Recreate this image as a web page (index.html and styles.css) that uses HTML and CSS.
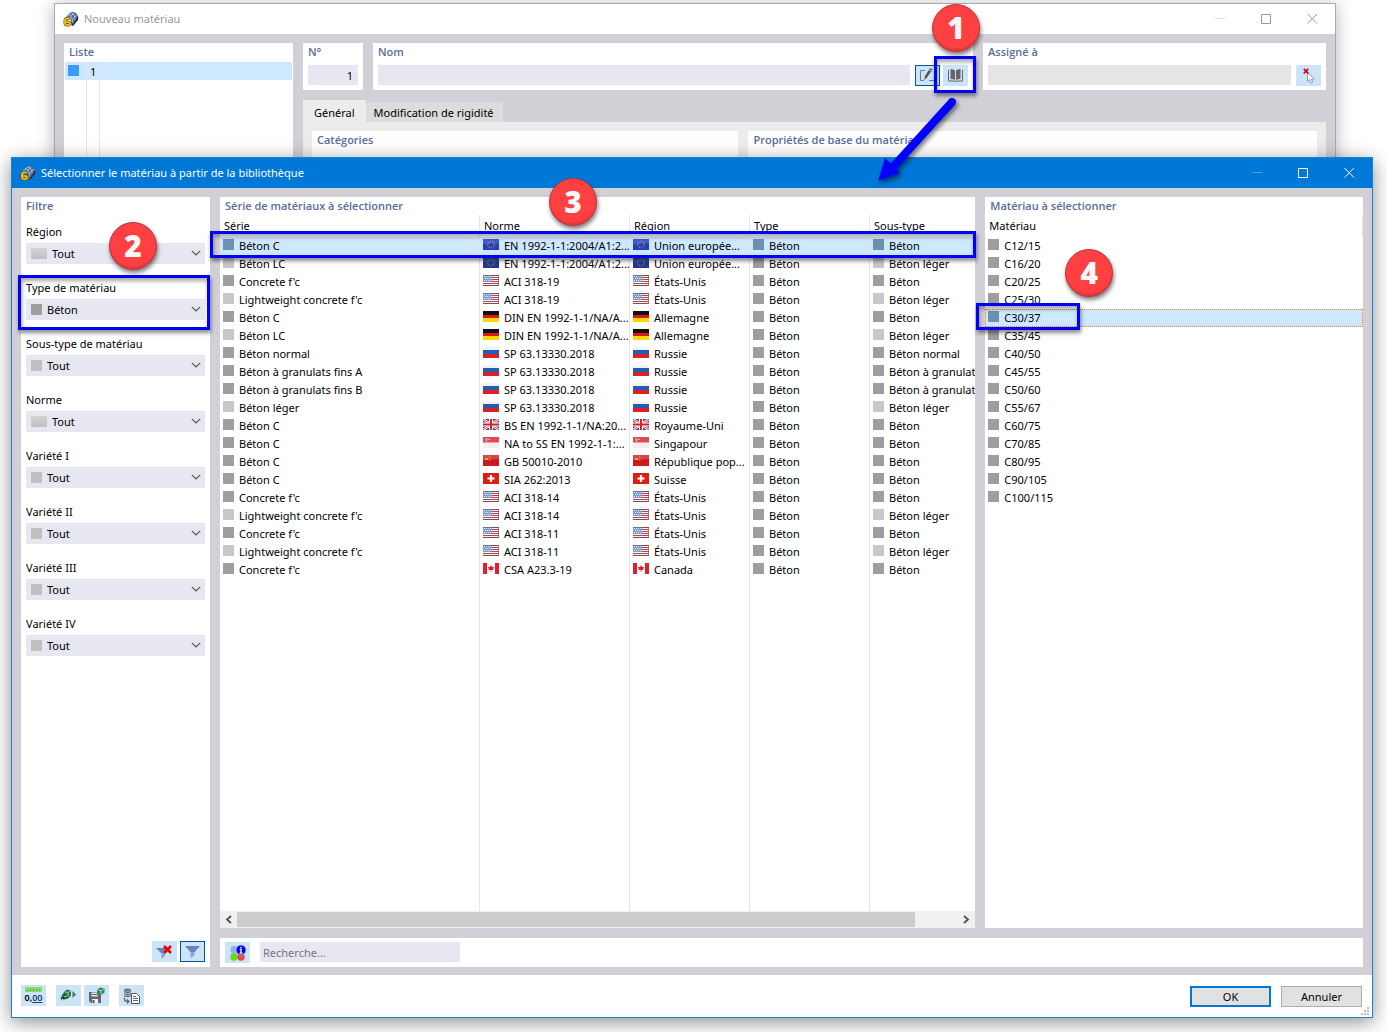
FILE: index.html
```html
<!DOCTYPE html>
<html lang="fr">
<head>
    <meta charset="UTF-8">
    <meta name="viewport" content="width=device-width, initial-scale=1.0">
    <title>Nouveau matériau</title>
    <link rel="stylesheet" href="styles.css">
</head>
<body>
    <!-- icons -->
    <svg class="hidden" aria-hidden="true">
        <symbol id="app" viewBox="0 0 16 16">
            <path d="M2 7 7 1.5Q9 0 12 1.5 15 3 15.5 7L10 15 8 14 8 9Q6 6 2 8z" fill="#56698a"/>
            <path d="M3 6 8 2M6 7l5-5M9 9l5-5M5 3.500Q9 4 10 12M8 1.500Q12 3 12.500 11" stroke="#a9bbd8" fill="none"/>
            <path d="M15 5v4l-5 6-1-1z" fill="#242c44"/>
            <path d="M6.500 7.500H4Q2 7.500 2 10v2q0 2 2 2h1q2 0 2-1.500T5 11H2.500" fill="none" stroke="#7c5a08" stroke-width="3"/>
            <path d="M6.500 7.500H4Q2 7.500 2 10v2q0 2 2 2h1q2 0 2-1.500T5 11H2.500" fill="none" stroke="#f5c926" stroke-width="1.600"/>
        </symbol>
        <symbol id="chevron" viewBox="0 0 10 6"><path d="M.8.8 5 5 9.200.8" fill="none" stroke="#555" stroke-width="1.100"/></symbol>
        <symbol id="minimize" viewBox="0 0 11 11"><path d="M0 4.500h10" stroke="currentColor" opacity=".3"/></symbol>
        <symbol id="maximize" viewBox="0 0 11 11"><path d="M.5.5h9v9h-9z" fill="none" stroke="currentColor"/></symbol>
        <symbol id="close" viewBox="0 0 11 11"><path d="M.5 0l9.500 9.500m0-9.500-9.500 9.500" fill="none" stroke="currentColor"/></symbol>
        <symbol id="edit" viewBox="0 0 17 15">
            <path d="M6 2.500H1.500v10h3M10 12.500h5.500V8" fill="none" stroke="#777"/>
            <path d="M5 12l1-4 5-8 2.500 1.500-5.500 8z" fill="#555"/><path d="M10 1.500l2.500 1.500" stroke="#cce4f7"/>
        </symbol>
        <symbol id="book" viewBox="0 0 16 14">
            <path d="M2.500 0Q5.500 0 7 1.500V11Q5.500 10 2.500 10zM8 1.500Q9.500 0 12.500 0v10Q9.500 10 8 11z" fill="#666"/>
            <path d="M.5 1v11h5.500q1.500 0 1.500 1 0-1 1.500-1h5.500V1" fill="none" stroke="#666"/>
        </symbol>
        <symbol id="pick" viewBox="0 0 12 16">
            <path d="M4.500 4.500v9l2-2 1.500 3.500 1.800-.8L8.300 11h3z" fill="#fff" stroke="#888" stroke-width=".8"/>
            <path d="M.8.8l4.500 4.500M5.300.8.8 5.300" stroke="#d40018" stroke-width="1.700"/>
        </symbol>
        <symbol id="funnel" viewBox="0 0 15 12">
            <path d="M0 0h15L9.500 6H5.500z" fill="#6683bd"/><path d="M5.500 6h4v3.500L5.500 12z" fill="#83a3e6"/>
        </symbol>
        <symbol id="unfilter" viewBox="0 0 17 14">
            <path d="M0 3h15L9.500 8.500H5.500z" fill="#6683bd"/><path d="M5.500 8.500h3.500V11l-3.500 3z" fill="#83a3e6"/>
            <path d="M8 1l7 7M15 1 8 8" stroke="#f00000" stroke-width="2.600"/>
        </symbol>
        <symbol id="info" viewBox="0 0 16 16">
            <circle cx="4.500" cy="5" r="4" fill="#9aace4"/><circle cx="4" cy="12" r="3.700" fill="#64dc1e"/><circle cx="11" cy="12" r="3.700" fill="#e64646"/>
            <circle cx="11" cy="5" r="5" fill="#0000f0" stroke="#cce4f7" stroke-width=".6"/>
            <path d="M11 1.800v1.500M9.800 4.500H11v3.700M9.500 8.200h3" fill="none" stroke="#fff" stroke-width="1.300"/>
        </symbol>
        <symbol id="part" viewBox="0 0 17 13">
            <path d="M4 3l3-2.500 4 1v5l-2 2.500-4 1-3 1.500-1.500-2L2 6z" fill="#277a4a"/>
            <path d="M5 3l3 .5 3-2M8 3.500V8" fill="none" stroke="#8fd3a8"/>
            <path d="M5 5.500L3 9M8 8l-3 1.500M1.500 9.500l3 .5" stroke="#174a2c" stroke-width="1.500"/>
            <path d="M4.500 7.500h2M2 10.500h1.500" stroke="#cdeed8"/><path d="M12.500 2l3.500 3.500L12.500 9z" fill="#666"/>
        </symbol>
        <symbol id="save" viewBox="0 0 17 17">
            <path d="M1 5h12v11H3l-2-2z" fill="#666"/><path d="M3.500 5.500h6v4h-6z" fill="#dcebf6"/><path d="M4 7.500h5" stroke="#666"/>
            <path d="M4 12h6v4H4z" fill="#f0f6fb"/><path d="M5.500 13v3" stroke="#555" stroke-width="2"/>
            <path d="M9 3l3-2.500 4.500 1v4L13 8l-4-.5z" fill="#2e8852"/><path d="M10 3l3 .8 3-1.800M13 4v3" stroke="#a5dcb8" fill="none"/>
        </symbol>
        <symbol id="database" viewBox="0 0 17 16">
            <ellipse cx="4.500" cy="2" rx="3.500" ry="1.500" fill="#777"/>
            <path d="M1 3.500q3.500 2 7 0M1 5.500q3.500 2 7 0M1 7.500q3.500 2 7 0M1.500 9.500v2q0 2 3.500 2M4 11.500l2 2-2 2" fill="none" stroke="#666" stroke-width="1.300"/>
            <path d="M8.500 5.500h5l3 3v7h-8z" fill="#fff" stroke="#555"/><path d="M10 8.500h3m-3 2h5m-5 2h5" stroke="#666"/>
        </symbol>

        <!-- flags -->
        <symbol id="eu" viewBox="0 0 16 11">
            <path d="M0 0h16v11H0z" fill="#24378f"/><path d="M0 0h16v4Q8 6 0 5z" fill="#3c4fa3"/>
            <circle cx="8" cy="5.500" r="3.300" fill="none" stroke="#b3a63e" stroke-dasharray="1 1"/>
        </symbol>
        <symbol id="us" viewBox="0 0 16 11">
            <path d="M0 0h16v11H0z" fill="#f4f4f4"/><path d="M0 .5h16M0 2.500h16M0 4.500h16M0 6.500h16M0 8.500h16M0 10.500h16" stroke="#b9444c"/>
            <path d="M0 0h9v7H0z" fill="#7f9bd0"/><path d="M1 1.500h8M2 3.500h7M1 5.500h8" stroke="#e4ebf8" stroke-dasharray="1 1"/>
            <path d="M0 .5h16M15.500 0v11M0 10.500h16" stroke="#555" opacity=".55"/>
        </symbol>
        <symbol id="de" viewBox="0 0 16 11"><path d="M0 0h16v4H0z" fill="#111"/><path d="M0 4h16v3H0z" fill="#dd1818"/><path d="M0 7h16v4H0z" fill="#ffd800"/></symbol>
        <symbol id="ru" viewBox="0 0 16 11"><path d="M0 0h16v4H0z" fill="#f1f2f3"/><path d="M0 3h16v4H0z" fill="#235cb0"/><path d="M0 7h16v4H0z" fill="#dc2028"/></symbol>
        <symbol id="gb" viewBox="0 0 16 11">
            <path d="M0 0h16v11H0z" fill="#34488f"/><path d="M0 0l16 11M16 0 0 11" stroke="#fff" stroke-width="2.500"/><path d="M0 0l16 11M16 0 0 11" stroke="#d23b46"/>
            <path d="M8 0v11M0 5.500h16" stroke="#fff" stroke-width="4"/><path d="M8 0v11M0 5.500h16" stroke="#dc1c2b" stroke-width="2"/>
        </symbol>
        <symbol id="sg" viewBox="0 0 16 11">
            <path d="M0 0h16v11H0z" fill="#f1f1f1"/><path d="M0 0h16v5.500H0z" fill="#e14858"/>
            <path d="M4 1q-3 1.500 0 3.500" fill="none" stroke="#fff"/><path d="M4.500 2.500h2" stroke="#fff" stroke-dasharray="1 .5"/>
        </symbol>
        <symbol id="cn" viewBox="0 0 16 11"><path d="M0 0h16v11H0z" fill="#ca191f"/><path d="M0 0h16v4L0 5z" fill="#d9444a"/><path d="M2 3h3v2H2z" fill="#e8b22d"/><path d="M6 1.500h1v1M7 4v1H6" stroke="#e29b2d" fill="none"/></symbol>
        <symbol id="ch" viewBox="0 0 16 11"><path d="M0 0h16v11H0z" fill="#dc2010"/><path d="M8 2v7M4.500 5.500h7" stroke="#fff" stroke-width="2.200"/></symbol>
        <symbol id="ca" viewBox="0 0 16 11"><path d="M0 0h16v11H0z" fill="#f6f6f6"/><path d="M0 0h4v11H0zM12 0h4v11h-4z" fill="#dc2031"/><path d="M8 2l1 2 2 0-1 3H8.300v2h-.6V7H6L5 4l2 0z" fill="#dc2031"/></symbol>
    </svg>

    <div class="desktop">
        <section class="window back">
            <header class="titlebar">
                <svg class="app-icon"><use href="#app"/></svg>
                <h1>Nouveau matériau</h1>
                <div class="controls">
                    <button aria-label="Réduire"><svg><use href="#minimize"/></svg></button>
                    <button aria-label="Agrandir"><svg><use href="#maximize"/></svg></button>
                    <button aria-label="Fermer"><svg><use href="#close"/></svg></button>
                </div>
            </header>
            <div class="back-body">
                <div class="panel list">
                    <h2>Liste</h2>
                    <div class="list-cols">
                        <div class="list-row"><span class="swatch blue"></span><span class="list-no">1</span></div>
                    </div>
                </div>
                <div class="editor">
                    <div class="fields">
                        <div class="panel number">
                            <h2><label for="no">N°</label></h2>
                            <div class="line"><input id="no" type="text" value="1"></div>
                        </div>
                        <div class="panel name">
                            <h2><label for="nom">Nom</label></h2>
                            <div class="line">
                                <input id="nom" type="text">
                                <div class="pair">
                                    <button class="icon-btn active" aria-label="Modifier"><svg width="17" height="15"><use href="#edit"/></svg></button>
                                    <button class="icon-btn" aria-label="Bibliothèque"><svg width="16" height="14"><use href="#book"/></svg></button>
                                </div>
                            </div>
                            <div class="mark mark-library"></div>
                            <svg class="arrow" viewBox="0 0 90 94"><path d="M77 7 18 72" stroke="#00f" stroke-width="8" stroke-linecap="round"/><path d="M3 86 10 63l15 15z" fill="#00f"/></svg>
                            <span class="badge badge-1">1</span>
                        </div>
                        <div class="panel assigned">
                            <h2><label for="assigne">Assigné à</label></h2>
                            <div class="line">
                                <input id="assigne" class="grey" type="text" disabled>
                                <button class="icon-btn" aria-label="Sélectionner"><svg width="12" height="16"><use href="#pick"/></svg></button>
                            </div>
                        </div>
                    </div>
                    <div class="tabs">
                        <button class="tab current">Général</button>
                        <button class="tab">Modification de rigidité</button>
                    </div>
                    <div class="tab-body">
                        <div class="panel"><h2>Catégories</h2></div>
                        <div class="panel"><h2>Propriétés de base du matériau</h2></div>
                    </div>
                </div>
            </div>
        </section>

        <section class="window dialog">
            <header class="titlebar">
                <svg class="app-icon"><use href="#app"/></svg>
                <h1>Sélectionner le matériau à partir de la bibliothèque</h1>
                <div class="controls">
                    <button aria-label="Réduire"><svg><use href="#minimize"/></svg></button>
                    <button aria-label="Agrandir"><svg><use href="#maximize"/></svg></button>
                    <button aria-label="Fermer"><svg><use href="#close"/></svg></button>
                </div>
            </header>
            <div class="dialog-body">
                <aside class="panel filters">
                    <h2>Filtre</h2>
                    <div id="filters"></div>
                    <div class="filter-buttons">
                        <button class="icon-btn" aria-label="Effacer le filtre"><svg width="17" height="14"><use href="#unfilter"/></svg></button>
                        <button class="icon-btn active" aria-label="Filtrer"><svg width="15" height="12"><use href="#funnel"/></svg></button>
                    </div>
                    <span class="badge badge-2">2</span>
                </aside>

                <div class="panel series">
                    <h2>Série de matériaux à sélectionner</h2>
                    <div class="table-wrap">
                        <table class="grid">
                            <colgroup><col class="c-serie"><col class="c-norme"><col class="c-std"><col class="c-std"><col class="c-last"></colgroup>
                            <thead><tr><th>Série</th><th>Norme</th><th>Région</th><th>Type</th><th>Sous-type</th></tr></thead>
                            <tbody id="series"></tbody>
                        </table>
                    </div>
                    <div class="scrollbar">
                        <svg viewBox="0 0 17 15"><path d="M11 4 7 7.500l4 3.500" fill="none" stroke="#505050" stroke-width="1.800"/></svg>
                        <div class="track"><div class="thumb"></div></div>
                        <svg viewBox="0 0 17 15"><path d="M6 4l4 3.500L6 11" fill="none" stroke="#505050" stroke-width="1.800"/></svg>
                    </div>
                    <div class="mark mark-series"></div>
                    <span class="badge badge-3">3</span>
                </div>

                <div class="panel materials">
                    <h2>Matériau à sélectionner</h2>
                    <table class="grid">
                        <thead><tr><th>Matériau</th></tr></thead>
                        <tbody id="materials"></tbody>
                    </table>
                    <div class="mark mark-material"></div>
                    <span class="badge badge-4">4</span>
                </div>

                <div class="panel search">
                    <button class="icon-btn" aria-label="Informations"><svg width="16" height="16"><use href="#info"/></svg></button>
                    <input type="text" placeholder="Recherche..." aria-label="Recherche">
                </div>
            </div>
            <footer class="dialog-footer">
                <button class="icon-btn units" aria-label="Unités">
                    <svg width="17" height="5" viewBox="0 0 17 5"><path d="M0 0h17v5H0z" fill="#8cda72"/><path d="M2.500 2v2m3-2v2m3-2v2m3-2v2m3-2v2" stroke="#5aaa44"/></svg>
                    <span>0,<u>00</u></span>
                </button>
                <div class="pair">
                    <button class="icon-btn" aria-label="Charger"><svg width="17" height="13"><use href="#part"/></svg></button>
                    <button class="icon-btn" aria-label="Enregistrer"><svg width="17" height="17"><use href="#save"/></svg></button>
                </div>
                <button class="icon-btn" aria-label="Base de données"><svg width="17" height="16"><use href="#database"/></svg></button>
                <div class="actions">
                    <button class="btn primary">OK</button>
                    <button class="btn">Annuler</button>
                </div>
                <svg class="grip" viewBox="0 0 8 8"><path d="M6 0h2v2H6zM3 3h2v2H3zM6 3h2v2H6zM0 6h2v2H0zM3 6h2v2H3zM6 6h2v2H6z" fill="#bfbfbf"/></svg>
            </footer>
        </section>
    </div>

    <script>
        const filters = [
            ["Région", "Tout", "wide"],
            ["Type de matériau", "Béton", "dark"],
            ["Sous-type de matériau", "Tout", ""],
            ["Norme", "Tout", "wide"],
            ["Variété I", "Tout", ""],
            ["Variété II", "Tout", ""],
            ["Variété III", "Tout", ""],
            ["Variété IV", "Tout", ""]
        ];

        // série, norme, drapeau, région, sous-type
        const series = [
            ["Béton C", "EN 1992-1-1:2004/A1:2...", "eu", "Union europée...", "Béton"],
            ["Béton LC", "EN 1992-1-1:2004/A1:2...", "eu", "Union europée...", "Béton léger"],
            ["Concrete f'c", "ACI 318-19", "us", "États-Unis", "Béton"],
            ["Lightweight concrete f'c", "ACI 318-19", "us", "États-Unis", "Béton léger"],
            ["Béton C", "DIN EN 1992-1-1/NA/A...", "de", "Allemagne", "Béton"],
            ["Béton LC", "DIN EN 1992-1-1/NA/A...", "de", "Allemagne", "Béton léger"],
            ["Béton normal", "SP 63.13330.2018", "ru", "Russie", "Béton normal"],
            ["Béton à granulats fins A", "SP 63.13330.2018", "ru", "Russie", "Béton à granulat"],
            ["Béton à granulats fins B", "SP 63.13330.2018", "ru", "Russie", "Béton à granulat"],
            ["Béton léger", "SP 63.13330.2018", "ru", "Russie", "Béton léger"],
            ["Béton C", "BS EN 1992-1-1/NA:20...", "gb", "Royaume-Uni", "Béton"],
            ["Béton C", "NA to SS EN 1992-1-1:...", "sg", "Singapour", "Béton"],
            ["Béton C", "GB 50010-2010", "cn", "République pop...", "Béton"],
            ["Béton C", "SIA 262:2013", "ch", "Suisse", "Béton"],
            ["Concrete f'c", "ACI 318-14", "us", "États-Unis", "Béton"],
            ["Lightweight concrete f'c", "ACI 318-14", "us", "États-Unis", "Béton léger"],
            ["Concrete f'c", "ACI 318-11", "us", "États-Unis", "Béton"],
            ["Lightweight concrete f'c", "ACI 318-11", "us", "États-Unis", "Béton léger"],
            ["Concrete f'c", "CSA A23.3-19", "ca", "Canada", "Béton"]
        ];

        const materials = ["C12/15", "C16/20", "C20/25", "C25/30", "C30/37", "C35/45", "C40/50", "C45/55",
            "C50/60", "C55/67", "C60/75", "C70/85", "C80/95", "C90/105", "C100/115"];

        function cell(text, light) {
            return `<td><span class="swatch${light ? " light" : ""}"></span>${text}</td>`;
        }

        function flagCell(text, flag) {
            return `<td><svg class="flag"><use href="#${flag}"/></svg>${text}</td>`;
        }

        document.getElementById("filters").innerHTML = filters.map(([label, value, kind], i) => `
            <div class="filter">
                <label for="filter-${i}">${label}</label>
                <div class="select-box ${kind}">
                    <select id="filter-${i}"><option>${value}</option></select>
                    <span class="swatch"></span>
                    <svg class="chevron"><use href="#chevron"/></svg>
                </div>
                ${i === 1 ? '<div class="mark mark-filter"></div>' : ""}
            </div>`).join("");

        document.getElementById("series").innerHTML = series.map(([name, norm, flag, region, sub], i) => {
            const light = sub === "Béton léger";
            return `<tr class="${i === 0 ? "selected" : ""}">` + cell(name, light || name === "Béton LC") + flagCell(norm, flag) +
                flagCell(region, flag) + cell("Béton", false) + cell(sub, light) + "</tr>";
        }).join("") + '<tr class="filler"><td></td><td></td><td></td><td></td><td></td></tr>';

        document.getElementById("materials").innerHTML = materials.map(name =>
            `<tr class="${name === "C30/37" ? "selected focus" : ""}">${cell(name, false)}</tr>`).join("");
    </script>
</body>
</html>
```

FILE: styles.css
```css
* {
    box-sizing: border-box;
}

body {
    margin: 0;
    background: #fff;
    color: #000;
    font: 11px/18px "Noto Sans", "Open Sans", sans-serif;
}

button, input, select {
    font: inherit;
    color: inherit;
    border: 0;
    border-radius: 0;
    margin: 0;
    padding: 0;
}

h1, h2 {
    margin: 0;
    font-size: 11px;
}

svg {
    display: block;
}

.hidden {
    position: absolute;
    width: 0;
    height: 0;
}

.desktop {
    position: relative;
    min-height: 100vh;
    overflow: hidden;
}

/* windows */
.window {
    position: absolute;
    display: flex;
    flex-direction: column;
    background: #fff;
}

.back {
    top: 3px;
    left: 54px;
    right: 51px;
    height: 400px;
    border: 1px solid #aaa;
    box-shadow: 0 2px 16px rgba(0, 0, 0, 0.3);
}

.dialog {
    top: 157px;
    left: 11px;
    right: 14px;
    bottom: 14px;
    border: 1px solid #1a80d2;
    box-shadow: 0 4px 18px rgba(0, 0, 0, 0.45);
}

.titlebar {
    display: flex;
    align-items: center;
    height: 30px;
    padding-left: 8px;
    flex: none;
}

.titlebar h1 {
    flex: 1;
    padding-left: 5px;
    font-weight: normal;
}

.app-icon {
    width: 16px;
    height: 16px;
}

.controls {
    display: flex;
}

.controls button {
    width: 46px;
    height: 30px;
    background: none;
}

.controls svg {
    width: 11px;
    height: 11px;
    margin: 0 auto;
}

.back .titlebar {
    color: #999;
}

.dialog .titlebar {
    background: #0078d7;
    color: #fff;
}

.panel {
    position: relative;
    background: #fff;
}

.panel h2 {
    height: 18px;
    padding-left: 5px;
    color: #5c6c98;
    font-family: "Open Sans", "Noto Sans", sans-serif;
    font-weight: 600;
}

/* new material window */
.back-body {
    display: flex;
    flex: 1;
    gap: 10px;
    padding: 9px;
    background: #d1d0d6;
}

.list {
    display: flex;
    flex-direction: column;
    width: 229px;
}

.list-cols {
    flex: 1;
    margin-top: 1px;
    padding: 0 1px;
}

.list-row {
    display: flex;
    height: 18px;
    padding-left: 3px;
    background: #cde8ff;
}

.list-no {
    height: 140px;
    margin-left: 7px;
    padding: 1px 3px 0;
    border: solid #e5e5e5;
    border-width: 0 1px;
}

.editor {
    display: flex;
    flex-direction: column;
    flex: 1;
}

.fields {
    display: flex;
    gap: 10px;
}

.fields .panel {
    height: 47px;
}

.number {
    width: 60px;
}

.name {
    flex: 7;
}

.assigned {
    flex: 4;
}

.line {
    display: flex;
    gap: 5px;
    padding: 4px 5px;
}

.line input {
    flex: 1;
    min-width: 0;
    height: 20px;
    padding: 0 5px;
    background: #e7e7f2;
}

.line input.grey {
    background: #e5e5e5;
}

.number input {
    text-align: right;
}

.pair {
    display: flex;
    gap: 3px;
}

.icon-btn {
    display: flex;
    align-items: center;
    justify-content: center;
    width: 25px;
    height: 21px;
    background: #cce4f7;
}

.icon-btn.active {
    border: 1px solid #00559b;
}

.tabs {
    display: flex;
    align-items: flex-end;
    margin-top: 10px;
}

.tab {
    height: 20px;
    padding: 2px 9px 0 8px;
    background: #dcdcdc;
}

.tab.current {
    height: 22px;
    padding: 4px 11px 0;
    background: #ececec;
}

.tab-body {
    display: flex;
    flex: 1;
    gap: 10px;
    padding: 9px;
    background: #ececec;
}

.tab-body .panel {
    flex: 3;
}

.tab-body .panel + .panel {
    flex: 4;
}

/* library dialog */
.dialog-body {
    display: grid;
    grid-template-columns: 189px 2fr 1fr;
    grid-template-rows: 1fr 29px;
    gap: 10px;
    flex: 1;
    min-height: 0;
    padding: 9px 9px 8px;
    background: #d1d0d6;
}

.filters {
    display: flex;
    flex-direction: column;
    grid-row: span 2;
}

.filter {
    position: relative;
    height: 56px;
    padding: 8px 5px 0;
}

.filter label {
    display: block;
    height: 20px;
}

.select-box {
    position: relative;
}

.select-box select {
    display: block;
    width: 100%;
    height: 21px;
    padding-left: 21px;
    background: #e7e7f2;
    appearance: none;
}

.select-box .swatch {
    position: absolute;
    top: 5px;
    left: 5px;
    margin: 0;
    background: #bfbfbf;
    pointer-events: none;
}

.select-box.dark .swatch {
    background: #9e9e9e;
}

.select-box.wide select {
    padding-left: 26px;
}

.select-box.wide .swatch {
    width: 16px;
    background: linear-gradient(#d4d4d4, #c0c0c0);
}

.chevron {
    position: absolute;
    top: 7px;
    right: 4px;
    width: 10px;
    height: 6px;
    pointer-events: none;
}

.filter-buttons {
    display: flex;
    justify-content: flex-end;
    gap: 3px;
    margin-top: auto;
    padding: 5px;
}

.series {
    display: flex;
    flex-direction: column;
    min-width: 0;
}

.table-wrap {
    flex: 1;
    min-height: 0;
    overflow: hidden;
}

.grid {
    width: 100%;
    border-collapse: separate;
    border-spacing: 0;
    table-layout: fixed;
}

.series .grid {
    width: 830px;
    height: 100%;
}

.c-serie { width: 260px; }
.c-norme { width: 150px; }
.c-std { width: 120px; }
.c-last { width: 180px; }

.grid th {
    height: 22px;
    padding: 0 0 0 4px;
    border-right: 1px solid #e5e5e5;
    font-weight: normal;
    text-align: left;
}

.grid td {
    height: 18px;
    padding: 0 0 0 3px;
    line-height: 18px;
    white-space: nowrap;
    overflow: hidden;
}

.series .grid td {
    border-right: 1px solid #e5e5e5;
}

.series .grid .filler td {
    height: auto;
}

.swatch {
    display: inline-block;
    width: 11px;
    height: 11px;
    margin-right: 5px;
    background: #9e9e9e;
    vertical-align: baseline;
}

.swatch.light {
    background: #c8c8c8;
}

.list-row .swatch {
    margin: 3px 0 0;
    background: #3c9cf3;
}

.flag {
    display: inline-block;
    width: 16px;
    height: 11px;
    margin-right: 5px;
    vertical-align: baseline;
}

.selected td {
    background: #cde8ff;
}

.selected .swatch {
    background: #6d91b0;
}

.selected .flag {
    filter: brightness(1.15) saturate(1.2);
}

.focus td {
    outline: 1px dotted #f08020;
    outline-offset: -1px;
}

.scrollbar {
    display: flex;
    height: 17px;
    padding: 1px 0;
    background: #f0f0f0;
}

.scrollbar svg {
    width: 17px;
    height: 15px;
}

.track {
    flex: 1;
}

.thumb {
    width: 94%;
    height: 15px;
    background: #cdcdcd;
}

.search {
    display: flex;
    gap: 10px;
    grid-column: 2 / 4;
    padding: 4px 5px;
}

.search input {
    width: 200px;
    height: 20px;
    padding: 0 3px;
    background: #e7e7f2;
}

.search input::placeholder {
    color: #767680;
}

.dialog-footer {
    position: relative;
    display: flex;
    gap: 10px;
    height: 42px;
    padding: 10px 10px 0 9px;
}

.units {
    flex-direction: column;
    font-size: 9px;
    font-weight: 600;
    line-height: 12px;
}

.units u {
    color: #253b7a;
}

.actions {
    display: flex;
    gap: 10px;
    margin-left: auto;
    padding-top: 1px;
}

.btn {
    width: 81px;
    height: 21px;
    background: #e1e1e1;
    border: 1px solid #adadad;
}

.btn.primary {
    border: 2px solid #0078d7;
}

.grip {
    position: absolute;
    right: 3px;
    bottom: 2px;
    width: 8px;
    height: 8px;
}

/* numbered steps */
.mark {
    position: absolute;
    z-index: 5;
    border: 3px solid #00f;
    box-shadow: 1px 3px 4px rgba(0, 0, 0, 0.45), inset 1px 3px 4px rgba(0, 0, 0, 0.35);
    pointer-events: none;
}

.mark-library {
    top: 13px;
    right: -3px;
    width: 42px;
    height: 37px;
}

.mark-filter {
    inset: 4px 0 -3px -3px;
}

.mark-series {
    top: 34px;
    left: -10px;
    right: -1px;
    height: 27px;
}

.mark-material {
    top: 106px;
    left: -9px;
    width: 104px;
    height: 27px;
}

.arrow {
    position: absolute;
    z-index: 5;
    top: 52px;
    right: 8px;
    width: 90px;
    height: 94px;
    filter: drop-shadow(2px 3px 2px rgba(0, 0, 0, 0.5));
    pointer-events: none;
}

.badge {
    position: absolute;
    z-index: 6;
    width: 48px;
    height: 48px;
    border: 1px solid #b8383d;
    border-radius: 50%;
    background: #ff4043;
    box-shadow: 1px 3px 4px rgba(0, 0, 0, 0.5), inset 0 -3px 2px -1px #e03438;
    color: #f7f7f7;
    font: 800 30px/46px "Open Sans", "Noto Sans", sans-serif;
    text-align: center;
}

.badge-1 {
    top: -39px;
    right: -7px;
}

.badge-2 {
    top: 25px;
    left: 88px;
}

.badge-3 {
    top: -19px;
    left: 329px;
}

.badge-4 {
    top: 52px;
    left: 80px;
}
```
